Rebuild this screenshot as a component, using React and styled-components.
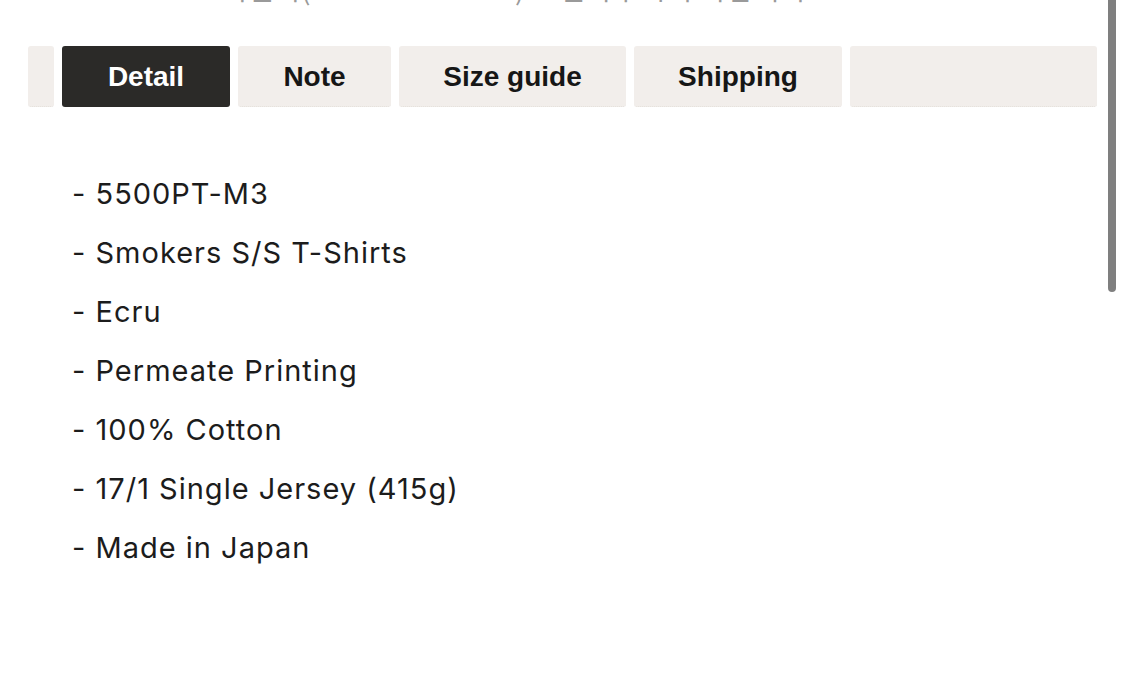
import React from 'react';
import styled, { createGlobalStyle } from 'styled-components';

const GlobalStyle = createGlobalStyle`
  html, body {
    margin: 0;
    padding: 0;
    background: #fff;
    overflow: hidden;
  }
  body {
    font-family: "Liberation Sans", Arial, sans-serif;
  }
`;

const details = [
  '5500PT-M3',
  'Smokers S/S T-Shirts',
  'Ecru',
  'Permeate Printing',
  '100% Cotton',
  '17/1 Single Jersey (415g)',
  'Made in Japan',
];

const tabs = [
  { label: 'Detail', width: 168 },
  { label: 'Note', width: 153 },
  { label: 'Size guide', width: 227 },
  { label: 'Shipping', width: 208 },
];

const App = () => {
  return (
    <>
      <GlobalStyle />
      <Page>
        <Notice>고객센터(070-8897-4550)로 연락주시기 바랍니다.</Notice>
        <TabBar>
          <Tab $width={26} />
          {tabs.map((t, i) => (
            <Tab key={t.label} $width={t.width} $active={i === 0}>
              {t.label}
            </Tab>
          ))}
          <Tab $fill />
        </TabBar>
        <DetailList>
          {details.map((d) => (
            <DetailItem key={d}>- {d}</DetailItem>
          ))}
        </DetailList>
        <ScrollThumb />
      </Page>
    </>
  );
};

export default App;

const Page = styled.div`
  position: relative;
  width: 1125px;
  height: 681px;
  overflow: hidden;
  padding: 0 28px;
  box-sizing: border-box;
`;

const Notice = styled.div`
  margin-top: -30px;
  padding-left: 166px;
  height: 36px;
  line-height: 36px;
  font-family: "Noto Sans CJK KR", sans-serif;
  font-size: 28px;
  letter-spacing: 1px;
  color: #9a9a9a;
  white-space: nowrap;
`;

const TabBar = styled.div`
  display: flex;
  gap: 8px;
  margin-top: 40px;
  height: 61px;
`;

const Tab = styled.div`
  flex: ${(p) => (p.$fill ? '1' : 'none')};
  width: ${(p) => (p.$width ? `${p.$width}px` : 'auto')};
  display: flex;
  align-items: center;
  justify-content: center;
  box-sizing: border-box;
  padding-top: 2px;
  border-radius: 3px;
  border-bottom: 1px dotted ${(p) => (p.$active ? '#2b2a28' : '#e4dfda')};
  background: ${(p) => (p.$active ? '#2b2a28' : '#f2eeeb')};
  color: ${(p) => (p.$active ? '#ffffff' : '#161616')};
  font-size: 28px;
  font-weight: bold;
  white-space: nowrap;
`;

const DetailList = styled.ul`
  list-style: none;
  margin: 57px 0 0;
  padding: 0 0 0 44px;
`;

const DetailItem = styled.li`
  font-family: Inter, "Noto Sans", sans-serif;
  font-size: 29px;
  line-height: 59px;
  letter-spacing: 1px;
  color: #1c1c1c;
`;

const ScrollThumb = styled.div`
  position: absolute;
  top: 0;
  right: 9px;
  width: 8px;
  height: 292px;
  border-radius: 0 0 4px 4px;
  background: #7f7f7f;
`;
